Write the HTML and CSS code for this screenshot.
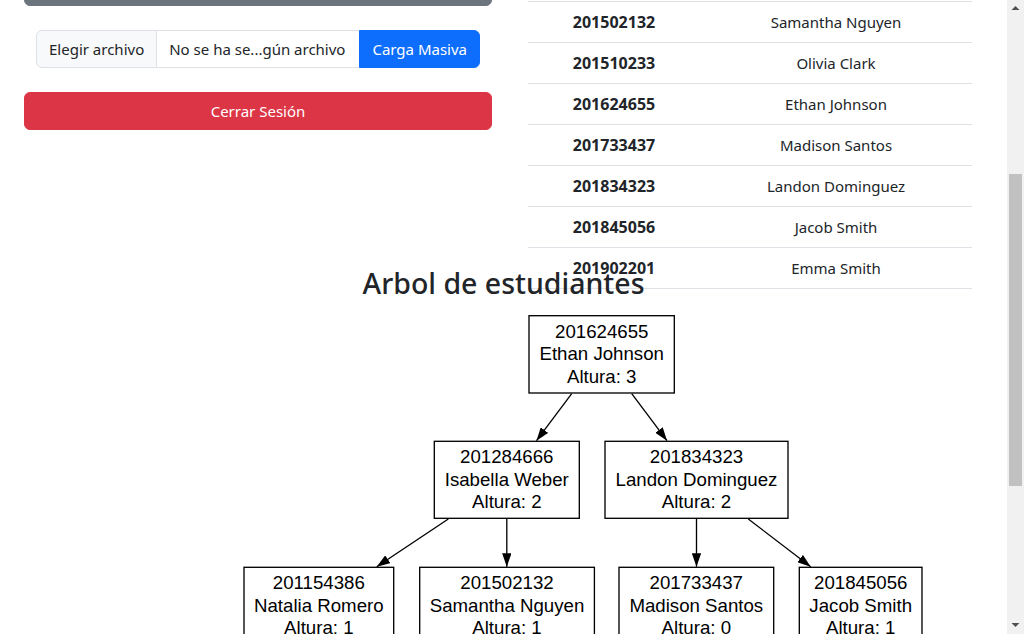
FILE: index.html
```html
<!DOCTYPE html>
<html lang="es">
<head>
<meta charset="utf-8">
<title>Panel de Administrador</title>
<link rel="stylesheet" href="styles.css">
</head>
<body>
<div class="app">
<div class="scroller" id="scroller">
<header class="intro">
  <h1 class="intro-title">Panel de Administrador</h1>
</header>
<main class="panel">
  <section class="actions">
    <input class="field" type="text" placeholder="Carnet del estudiante">
    <button type="button" class="btn btn-secondary">Mostrar estudiantes</button>
    <form class="upload">
      <div class="input-group">
        <span class="file-btn">Elegir archivo</span>
        <span class="file-name">No se ha se...gún archivo</span>
        <button type="button" class="btn btn-primary">Carga Masiva</button>
      </div>
    </form>
    <button type="button" class="btn btn-danger">Cerrar Sesión</button>
  </section>
  <section class="students">
    <table class="table">
      <thead>
        <tr><th class="col-id">Carnet</th><th>Nombre</th></tr>
      </thead>
      <tbody>
        <tr><th class="col-id">201154386</th><td>Natalia Romero</td></tr>
        <tr><th class="col-id">201284666</th><td>Isabella Weber</td></tr>
        <tr><th class="col-id">201502132</th><td>Samantha Nguyen</td></tr>
        <tr><th class="col-id">201510233</th><td>Olivia Clark</td></tr>
        <tr><th class="col-id">201624655</th><td>Ethan Johnson</td></tr>
        <tr><th class="col-id">201733437</th><td>Madison Santos</td></tr>
        <tr><th class="col-id">201834323</th><td>Landon Dominguez</td></tr>
        <tr><th class="col-id">201845056</th><td>Jacob Smith</td></tr>
        <tr><th class="col-id">201902201</th><td>Emma Smith</td></tr>
      </tbody>
    </table>
  </section>
</main>
<section class="tree-section">
  <h2 class="tree-title">Arbol de estudiantes</h2>
  <svg class="tree" width="1007" height="467" viewBox="0 0 1007 467" xmlns="http://www.w3.org/2000/svg">
    <defs>
      <marker id="arrow" viewBox="0 0 10 7" refX="10" refY="3.5" markerWidth="13.33" markerHeight="9.33" markerUnits="userSpaceOnUse" orient="auto">
        <path d="M0,0L10,3.5L0,7z" fill="#000"/>
      </marker>
    </defs>
    <g transform="translate(0,-309)" class="graph">
      <g class="edges">
        <line x1="571.7" y1="393.7" x2="536.5" y2="440.7" marker-end="url(#arrow)"/>
        <line x1="631.7" y1="393.7" x2="667" y2="440.7" marker-end="url(#arrow)"/>
        <line x1="448.3" y1="519" x2="376.7" y2="566.7" marker-end="url(#arrow)"/>
        <line x1="506.8" y1="519" x2="506.8" y2="566.7" marker-end="url(#arrow)"/>
        <line x1="696.5" y1="519" x2="696.5" y2="566.7" marker-end="url(#arrow)"/>
        <line x1="748.3" y1="519" x2="810.7" y2="566.7" marker-end="url(#arrow)"/>
        <line x1="550" y1="645" x2="575" y2="692" marker-end="url(#arrow)"/>
        <line x1="880" y1="645" x2="900" y2="692" marker-end="url(#arrow)"/>
      </g>
      <g class="nodes">
        <rect x="529" y="315.7" width="145.3" height="77.3"/>
        <text x="601.7" y="337.7">201624655</text>
        <text x="601.7" y="360.1">Ethan Johnson</text>
        <text x="601.7" y="382.5">Altura: 3</text>

        <rect x="434.3" y="441.3" width="145" height="77"/>
        <text x="506.8" y="463.4">201284666</text>
        <text x="506.8" y="485.8">Isabella Weber</text>
        <text x="506.8" y="508.2">Altura: 2</text>

        <rect x="605" y="441.3" width="183" height="77"/>
        <text x="696.5" y="463.4">201834323</text>
        <text x="696.5" y="485.8">Landon Dominguez</text>
        <text x="696.5" y="508.2">Altura: 2</text>

        <rect x="244" y="567.3" width="149.7" height="77"/>
        <text x="318.8" y="589.4">201154386</text>
        <text x="318.8" y="611.8">Natalia Romero</text>
        <text x="318.8" y="634.2">Altura: 1</text>

        <rect x="419.7" y="567.3" width="174.7" height="77"/>
        <text x="507" y="589.4">201502132</text>
        <text x="507" y="611.8">Samantha Nguyen</text>
        <text x="507" y="634.2">Altura: 1</text>

        <rect x="619" y="567.3" width="154.7" height="77"/>
        <text x="696.3" y="589.4">201733437</text>
        <text x="696.3" y="611.8">Madison Santos</text>
        <text x="696.3" y="634.2">Altura: 0</text>

        <rect x="799.3" y="567.3" width="122.7" height="77"/>
        <text x="860.7" y="589.4">201845056</text>
        <text x="860.7" y="611.8">Jacob Smith</text>
        <text x="860.7" y="634.2">Altura: 1</text>

        <rect x="522" y="692.3" width="122" height="77"/>
        <text x="583" y="715">201510233</text>
        <text x="583" y="737.4">Olivia Clark</text>
        <text x="583" y="759.8">Altura: 0</text>

        <rect x="842" y="692.3" width="122" height="77"/>
        <text x="903" y="715">201902201</text>
        <text x="903" y="737.4">Emma Smith</text>
        <text x="903" y="759.8">Altura: 0</text>
      </g>
    </g>
  </svg>
</section>
</div>
<div class="scrollbar" aria-hidden="true">
  <div class="sb-btn">
    <svg width="17" height="17" viewBox="0 0 17 17"><path d="M4.5 10h8l-4-4z" fill="#505050"/></svg>
  </div>
  <div class="sb-track" id="track">
    <div class="sb-thumb" id="thumb"></div>
  </div>
  <div class="sb-btn">
    <svg width="17" height="17" viewBox="0 0 17 17"><path d="M4.5 6h8l-4 4z" fill="#505050"/></svg>
  </div>
</div>
</div>
<script src="script.js"></script>
</body>
</html>
```

FILE: styles.css
```css
* {
  box-sizing: border-box;
}

html,
body {
  margin: 0;
  padding: 0;
  height: 100%;
  overflow: hidden;
}

body {
  font-family: "Noto Sans", "Segoe UI", sans-serif;
  font-size: 15px;
  line-height: 1.5;
  color: #212529;
  background: #fff;
}

.app {
  display: flex;
  height: 100vh;
}

.scroller {
  flex: 1;
  min-width: 0;
  height: 100%;
  overflow: hidden;
}

.scrollbar {
  flex: 0 0 17px;
  display: flex;
  flex-direction: column;
  background: #f1f1f1;
}

.sb-btn {
  flex: 0 0 17px;
  height: 17px;
}

.sb-btn svg {
  display: block;
}

.sb-track {
  flex: 1;
  padding: 0 2px;
}

.sb-thumb {
  background: #c1c1c1;
  height: 312px;
}

.intro {
  height: 198px;
  padding: 64px 24px 0;
}

.intro-title {
  margin: 0;
  font-size: 34px;
  font-weight: 500;
  line-height: 44px;
}

.panel {
  height: 386px;
  display: grid;
  grid-template-columns: 468px 444px;
  column-gap: 36px;
  padding-left: 24px;
  align-items: start;
}

.actions {
  display: flex;
  flex-direction: column;
  gap: 24px;
  padding-top: 27px;
}

.field {
  height: 38px;
  padding: 6px 12px;
  font: inherit;
  color: #212529;
  border: 1px solid #dee2e6;
  border-radius: 6px;
}

.btn {
  height: 38px;
  padding: 6px 12px;
  font: inherit;
  line-height: 24px;
  color: #fff;
  border: 1px solid transparent;
  border-radius: 6px;
  text-align: center;
  cursor: pointer;
}

.btn-secondary {
  background: #6c757d;
  border-color: #6c757d;
}

.btn-danger {
  background: #dc3545;
  border-color: #dc3545;
}

.btn-primary {
  background: #0d6efd;
  border-color: #0d6efd;
  border-radius: 0 6px 6px 0;
  white-space: nowrap;
}

.upload {
  margin: 0;
  padding: 0 12px;
}

.input-group {
  display: flex;
  height: 38px;
}

.file-btn {
  padding: 6px 12px;
  line-height: 24px;
  background: #f8f9fa;
  border: 1px solid #dee2e6;
  border-radius: 6px 0 0 6px;
  white-space: nowrap;
}

.file-name {
  flex: 1;
  padding: 6px 12px;
  line-height: 24px;
  border: 1px solid #dee2e6;
  border-left: 0;
  border-right: 0;
  white-space: nowrap;
  overflow: hidden;
}

.table {
  width: 444px;
  border-collapse: collapse;
}

.table th,
.table td {
  padding: 8px;
  line-height: 24px;
  text-align: center;
  border-bottom: 1px solid #dee2e6;
}

.table th {
  font-size: 16px;
  font-weight: 700;
}

.col-id {
  width: 172px;
}

.tree-section {
  padding-bottom: 125px;
}

.tree-title {
  margin: 0 0 8px;
  font-size: 28.5px;
  font-weight: 500;
  line-height: 36px;
  text-align: center;
}

.tree {
  display: block;
}

.graph line {
  stroke: #000;
  stroke-width: 1.33;
}

.graph rect {
  fill: none;
  stroke: #000;
  stroke-width: 1.33;
}

.graph text {
  font-family: "Liberation Sans", Arial, sans-serif;
  font-size: 18.67px;
  text-anchor: middle;
  fill: #000;
}
```

FILE: script.js
```js
var scroller = document.getElementById("scroller");
var track = document.getElementById("track");
var thumb = document.getElementById("thumb");

function syncScroll() {
  scroller.scrollTop = 319;
  var total = scroller.scrollHeight;
  var view = scroller.clientHeight;
  var trackLen = track.clientHeight;
  var thumbLen = trackLen * view / total;
  var maxScroll = total - view;
  var top = maxScroll > 0 ? (scroller.scrollTop / maxScroll) * (trackLen - thumbLen) : 0;
  thumb.style.height = thumbLen + "px";
  thumb.style.marginTop = top + "px";
}

syncScroll();
window.addEventListener("load", syncScroll);
```
